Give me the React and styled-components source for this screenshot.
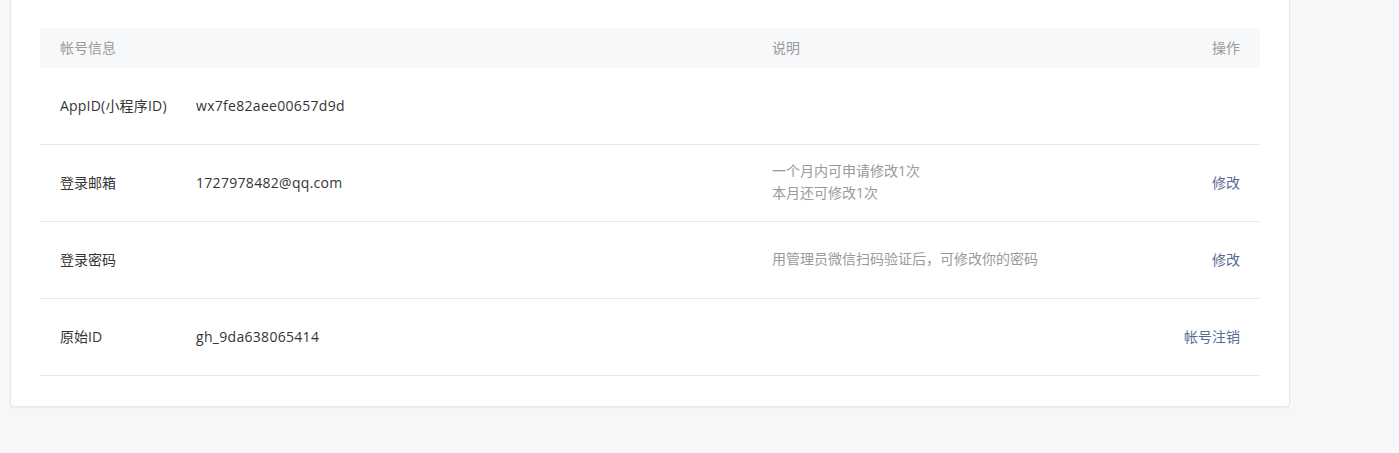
import styled, { createGlobalStyle } from "styled-components";

const Global = createGlobalStyle`
  html, body {
    margin: 0;
    padding: 0;
    background: #f6f7f9;
  }
  body {
    font-family: "Open Sans", "Noto Sans CJK SC", sans-serif;
  }
`;

const Page = styled.div`
  padding: 0 109px 0 10px;
  height: 453px;
  box-sizing: border-box;
`;

const Card = styled.div`
  background: #fff;
  border: 1px solid #e7e7eb;
  border-top: none;
  border-radius: 0 0 4px 4px;
  box-shadow: 0 1px 2px rgba(0, 0, 0, 0.05);
  padding: 28px 29px 30px;
`;

const Row = styled.div`
  display: grid;
  grid-template-columns: 136px 576px 1fr auto;
  align-items: center;
  box-sizing: border-box;
  padding: 0 20px 2px;
  height: ${(p) => (p.$head ? "40px" : "77px")};
  background: ${(p) => (p.$head ? "#f6f8f9" : "#fff")};
  border-bottom: ${(p) => (p.$head ? "none" : "1px solid #e7e7eb")};
  font-size: 14px;
  color: ${(p) => (p.$head ? "#9a9a9a" : "#353535")};
`;

const Label = styled.div`
  white-space: nowrap;
  letter-spacing: ${(p) => (p.$latin ? "0.2px" : "0")};
`;

const Value = styled.div`
  white-space: nowrap;
  letter-spacing: 0.3px;
`;

const Desc = styled.div`
  color: #9a9a9a;
  line-height: 22px;
`;

const Op = styled.div`
  text-align: right;
  white-space: nowrap;
`;

const Link = styled.a`
  color: #576b95;
  text-decoration: none;
  cursor: pointer;
`;

const rows = [
  { label: "AppID(小程序ID)", latin: true, value: "wx7fe82aee00657d9d", desc: [], op: "" },
  {
    label: "登录邮箱",
    value: "1727978482@qq.com",
    desc: ["一个月内可申请修改1次", "本月还可修改1次"],
    op: "修改",
  },
  {
    label: "登录密码",
    value: "",
    desc: ["用管理员微信扫码验证后，可修改你的密码"],
    op: "修改",
  },
  { label: "原始ID", value: "gh_9da638065414", desc: [], op: "帐号注销" },
];

export default function App() {
  return (
    <>
      <Global />
      <Page>
        <Card>
          <Row $head>
            <Label>帐号信息</Label>
            <div />
            <div>说明</div>
            <Op>操作</Op>
          </Row>
          {rows.map((r) => (
            <Row key={r.label}>
              <Label $latin={r.latin}>{r.label}</Label>
              <Value>{r.value}</Value>
              <Desc>
                {r.desc.map((d) => (
                  <div key={d}>{d}</div>
                ))}
              </Desc>
              <Op>{r.op && <Link>{r.op}</Link>}</Op>
            </Row>
          ))}
        </Card>
      </Page>
    </>
  );
}
